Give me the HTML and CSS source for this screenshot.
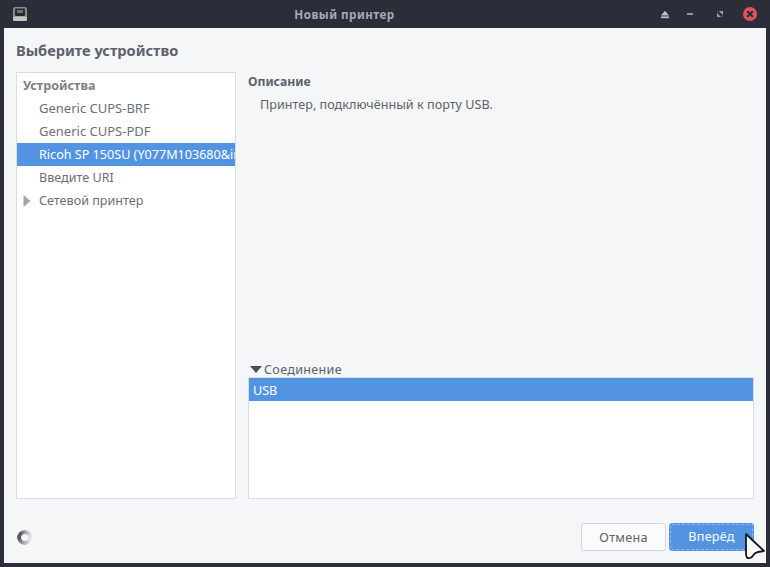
FILE: index.html
```html
<!DOCTYPE html>
<html lang="ru">
<head>
  <meta charset="UTF-8" />
  <title>Новый принтер</title>
  <link rel="stylesheet" href="styles.css">
</head>
<body>
  <div class="window">
    <header class="titlebar">
      <svg class="app-icon" width="14" height="14" viewBox="0 0 14 14">
        <rect x="0" y="0" width="14" height="14" rx="2.5" fill="#8a8a8a"/>
        <rect x="0" y="9.5" width="14" height="4.5" rx="1.5" fill="#c4c4c4"/>
        <rect x="2" y="1.5" width="10" height="7.5" rx="1" fill="#26272b"/>
        <rect x="4" y="3" width="6" height="3" fill="#707276"/>
      </svg>
      <div class="title">Новый принтер</div>
      <div class="controls">
        <svg class="ctl" width="14" height="14" viewBox="0 0 14 14">
          <path d="M7 3.8 L11 8.4 H3 Z" fill="#bcc1cc"/>
          <rect x="3" y="9.4" width="8" height="1.8" fill="#bcc1cc"/>
        </svg>
        <svg class="ctl ctl-min" width="14" height="14" viewBox="0 0 14 14">
          <rect x="4" y="6" width="6" height="2" fill="#8f95a2"/>
        </svg>
        <svg class="ctl ctl-max" width="14" height="14" viewBox="0 0 14 14">
          <path d="M6 4 H10 V8 Z M4 6 L8 10 H4 Z" fill="#9ca1ad"/>
          <path d="M4 4 H6 L4 6 Z M10 8 V10 H8 Z" fill="#5a5f6c"/>
        </svg>
        <svg class="ctl ctl-close" width="14" height="14" viewBox="0 0 14 14">
          <circle cx="7" cy="7" r="7" fill="#e0525c"/>
          <path d="M4.7 4.7 L9.3 9.3 M9.3 4.7 L4.7 9.3" stroke="#2b2e39" stroke-width="2" stroke-linecap="round"/>
        </svg>
      </div>
    </header>

    <main class="content">
      <h1 class="heading">Выберите устройство</h1>

      <div class="panes">
        <div class="device-list">
          <div class="list-head">Устройства</div>
          <div class="list-item latin">Generic CUPS-BRF</div>
          <div class="list-item latin">Generic CUPS-PDF</div>
          <div class="list-item selected">Ricoh SP 150SU (Y077M103680&amp;interface=1)</div>
          <div class="list-item">Введите URI</div>
          <div class="list-item">
            <svg class="arrow-right" width="8" height="12" viewBox="0 0 8 12"><path d="M0.5 0 L7.5 6 L0.5 12 Z" fill="#a3a5a9"/></svg>
            Сетевой принтер
          </div>
        </div>

        <div class="details">
          <div class="desc">
            <div class="desc-title">Описание</div>
            <div class="desc-text">Принтер, подключённый к порту USB.</div>
          </div>
          <div class="conn">
            <div class="conn-head">
              <svg width="12" height="7" viewBox="0 0 12 7"><path d="M0 0 H12 L6 7 Z" fill="#4a4d57"/></svg>
              Соединение
            </div>
            <div class="conn-list">
              <div class="conn-row">USB</div>
            </div>
          </div>
        </div>
      </div>

      <footer class="actions">
        <div class="spinner"></div>
        <div class="buttons">
          <button class="btn">Отмена</button>
          <button class="btn primary"><span class="focus-ring">Вперёд</span></button>
        </div>
      </footer>
    </main>

    <svg class="cursor" width="24" height="30" viewBox="0 0 24 30">
      <path d="M2 2 L2 22 Q2 27 6 26 Q8 25.5 9.5 23 Q11 20.5 14 20 L20 19 Z" fill="#fff" stroke="#16181c" stroke-width="1.8" stroke-linejoin="round"/>
    </svg>
  </div>
</body>
</html>
```

FILE: styles.css
```css
* {
  margin: 0;
  padding: 0;
  box-sizing: border-box;
}

html, body {
  width: 770px;
  height: 567px;
  overflow: hidden;
  font-family: "Noto Sans", sans-serif;
  font-size: 12.6px;
  color: #5c616c;
  background: #2b2e39;
}

.window {
  position: relative;
  width: 770px;
  height: 567px;
  display: flex;
  flex-direction: column;
  padding: 0 4px 4px;
  background: #2b2e39;
}

.titlebar {
  height: 28px;
  flex: none;
  display: flex;
  align-items: center;
  padding: 0 9px;
}

.title {
  flex: 1;
  padding-left: 4px;
  text-align: center;
  font-size: 11.6px;
  font-weight: 700;
  color: #a5abb7;
  letter-spacing: 0.5px;
}

.controls {
  display: flex;
  align-items: center;
}

.ctl {
  display: block;
}

.ctl-min {
  margin-left: 11px;
}

.ctl-max,
.ctl-close {
  margin-left: 16px;
}

.content {
  flex: 1;
  display: flex;
  flex-direction: column;
  background: #f5f6f7;
  padding: 0 12px 12px;
}

.heading {
  font-size: 14.6px;
  font-weight: 700;
  color: #5c616c;
  line-height: 20px;
  margin-top: 12px;
  margin-bottom: 12px;
}

.panes {
  flex: 1;
  display: flex;
  gap: 12px;
  min-height: 0;
}

.device-list {
  width: 220px;
  flex: none;
  background: #fff;
  border: 1px solid #d9dce3;
  overflow: hidden;
  padding-top: 1px;
}

.list-head {
  height: 23px;
  line-height: 23px;
  padding-left: 6px;
  font-weight: 700;
  color: #7d8087;
}

.list-item {
  position: relative;
  height: 23px;
  line-height: 23px;
  padding-left: 22px;
  white-space: nowrap;
  overflow: hidden;
  color: #6b6f78;
}

.list-item.latin {
  font-size: 13px;
}

.list-item.selected {
  background: #5294e2;
  color: #fff;
}

.arrow-right {
  position: absolute;
  left: 6px;
  top: 6px;
}

.details {
  flex: 1;
  display: flex;
  flex-direction: column;
  justify-content: space-between;
}

.desc {
  padding-top: 1px;
}

.desc-title {
  font-size: 12.2px;
  font-weight: 700;
  line-height: 18px;
  margin-bottom: 5px;
}

.desc-text {
  padding-left: 12px;
  line-height: 18px;
  letter-spacing: 0.02px;
}

.conn {
  display: flex;
  flex-direction: column;
}

.conn-head {
  display: flex;
  align-items: center;
  gap: 2px;
  height: 15px;
  padding-left: 2px;
  letter-spacing: 0.3px;
}

.conn-list {
  height: 122px;
  background: #fff;
  border: 1px solid #d9dce3;
}

.conn-row {
  height: 23px;
  line-height: 25px;
  padding-left: 4px;
  background: #5294e2;
  color: #fff;
}

.actions {
  flex: none;
  display: flex;
  align-items: center;
  justify-content: space-between;
  margin-top: 24px;
}

.spinner {
  width: 15px;
  height: 15px;
  margin-left: 1px;
  border-radius: 50%;
  background: conic-gradient(#9a9ca2 0deg, #dfe0e2 70deg, #e4e5e7 120deg, #a6a8ad 190deg, #55585f 260deg, #5c5f67 320deg, #9a9ca2 360deg);
  -webkit-mask: radial-gradient(circle, transparent 3px, #000 3.8px);
  mask: radial-gradient(circle, transparent 3px, #000 3.8px);
  filter: blur(0.3px);
}

.buttons {
  display: flex;
  gap: 3px;
}

.btn {
  width: 85px;
  height: 28px;
  font-family: inherit;
  font-size: 12.6px;
  letter-spacing: 0.25px;
  color: #5c616c;
  background: #fbfbfc;
  border: 1px solid #cfd6e6;
  border-radius: 3px;
}

.btn.primary {
  padding: 0;
  color: #fff;
  background: #5294e2;
  border-color: #5294e2;
}

.focus-ring {
  display: block;
  height: 100%;
  line-height: 24px;
  border: 1px dashed rgba(255, 255, 255, 0.35);
  border-radius: 2px;
}

.cursor {
  position: absolute;
  left: 744px;
  top: 532px;
}
```
